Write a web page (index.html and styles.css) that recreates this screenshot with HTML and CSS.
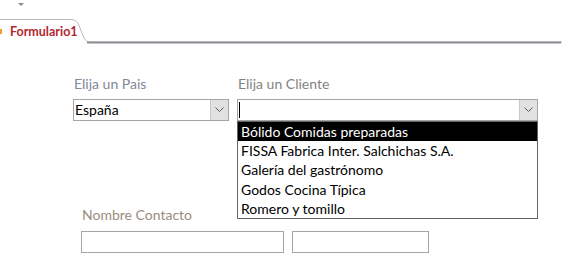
FILE: index.html
```html
<!DOCTYPE html>
<html lang="es">
<head>
<meta charset="utf-8">
<link rel="stylesheet" href="styles.css">
</head>
<body>
<div class="topbar">
  <svg class="qa" width="6" height="4" viewBox="0 0 6 4"><path d="M0 0H6L3 3Z" fill="#8a8a8a"/></svg>
</div>
<div class="tabstrip">
  <svg class="tabshape" width="562" height="25" viewBox="0 0 562 25">
    <path d="M0 0.5H70C76 0.5 78 3 80 9L84 19C86 22.5 88 23 92 23H562" fill="none" stroke="#b9b9b9" stroke-width="1"/>
    <path d="M87 23.5H561" stroke="#8e8e96" stroke-width="2"/>
  </svg>
  <div class="tab"><span class="mark"></span>Formulario1</div>
</div>
<div class="form">
  <div class="row">
    <div class="field pais">
      <div class="label blue">Elija un Pais</div>
      <div class="combo">
        <div class="value">España</div>
        <div class="btn"><svg width="9" height="6" viewBox="0 0 9 6"><path d="M0.5 0.5L4.5 4.5L8.5 0.5" fill="none" stroke="#5a5a5a" stroke-width="1"/></svg></div>
      </div>
    </div>
    <div class="field cliente">
      <div class="label">Elija un Cliente</div>
      <div class="combo">
        <div class="value"><span class="caret"></span></div>
        <div class="btn"><svg width="9" height="6" viewBox="0 0 9 6"><path d="M0.5 0.5L4.5 4.5L8.5 0.5" fill="none" stroke="#5a5a5a" stroke-width="1"/></svg></div>
        <ul class="list">
          <li class="sel">Bólido Comidas preparadas</li>
          <li>FISSA Fabrica Inter. Salchichas S.A.</li>
          <li>Galería del gastrónomo</li>
          <li>Godos Cocina Típica</li>
          <li>Romero y tomillo</li>
        </ul>
      </div>
    </div>
  </div>
  <div class="contacto">
    <div class="label tan">Nombre Contacto</div>
    <div class="inputs">
      <div class="box b1"></div>
      <div class="box b2"></div>
    </div>
  </div>
</div>
</body>
</html>
```
FILE: styles.css
```css
html, body { margin: 0; padding: 0; background: #fff; }
body { width: 562px; height: 274px; overflow: hidden; font-family: Lato, "Open Sans", sans-serif; color: #000; }
.topbar { height: 19px; position: relative; }
.qa { display: block; margin-left: 18px; padding-top: 3px; }
.tabstrip { position: relative; height: 24px; }
.tabshape { position: absolute; left: 0; top: 0; }
.tab { position: relative; display: flex; align-items: center; height: 25px; padding-left: 10px; font-size: 12.5px; font-weight: 700; color: #b3262e; }
.mark { position: absolute; left: 0; top: 10px; width: 2px; height: 5px; background: #f0a030; }
.form { padding: 34px 0 0 73px; }
.row { display: flex; gap: 8px; }
.label { font-size: 14px; line-height: 14px; color: #838383; height: 22px; padding-left: 1px; }
.label.blue { color: #7d8899; }
.label.tan { color: #9a8b7e; }
.combo { position: relative; display: flex; height: 22px; box-sizing: border-box; border: 1px solid #a5a5a5; background: #fff; }
.pais .combo { width: 156px; }
.cliente .combo { width: 301px; }
.value { flex: 1; font-size: 14px; line-height: 20px; padding-left: 1px; display: flex; align-items: center; }
.caret { width: 1px; height: 16px; background: #000; margin-left: 0; }
.btn { width: 17px; background: #e1e1e1; border-left: 1px solid #c8c8c8; display: flex; align-items: center; justify-content: center; }
.list { position: absolute; left: -1px; right: -1px; top: 21px; margin: 0; padding: 0; list-style: none; border: 1px solid #646464; background: #fff; }
.list li { font-size: 14px; height: 19.2px; line-height: 19px; padding-left: 3px; white-space: nowrap; }
.list li.sel { background: #000; color: #fff; }
.contacto { padding: 87px 0 0 8px; }
.contacto .label { height: 23px; }
.inputs { display: flex; gap: 8px; }
.box { height: 22px; box-sizing: border-box; border: 1px solid #a5a5a5; }
.b1 { width: 203px; }
.b2 { width: 137px; }
```
